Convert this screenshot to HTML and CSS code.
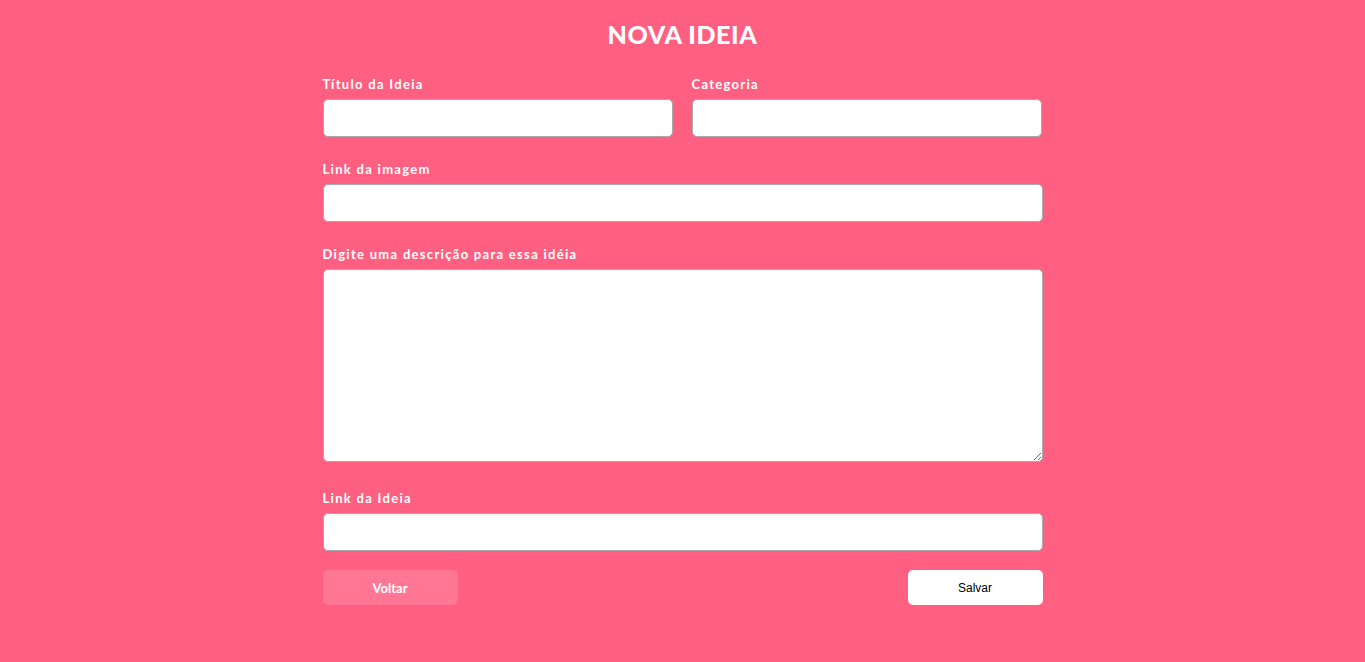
FILE: index.html
```html
<!DOCTYPE html>
<html lang="pt">
<head>
<meta charset="utf-8">
<title>Nova Ideia</title>
<link rel="stylesheet" href="styles.css">
</head>
<body>
<main class="page">
  <h1 class="title">NOVA IDEIA</h1>
  <form class="form">
    <div class="row two">
      <div class="field">
        <label class="label">Título da Ideia</label>
        <input class="input" type="text">
      </div>
      <div class="field">
        <label class="label">Categoria</label>
        <input class="input" type="text">
      </div>
    </div>
    <div class="field">
      <label class="label">Link da imagem</label>
      <input class="input" type="text">
    </div>
    <div class="field">
      <label class="label">Digite uma descrição para essa idéia</label>
      <textarea class="textarea"></textarea>
    </div>
    <div class="field">
      <label class="label">Link da Ideia</label>
      <input class="input" type="text">
    </div>
    <div class="actions">
      <button type="button" class="btn btn-back">Voltar</button>
      <button type="button" class="btn btn-save">Salvar</button>
    </div>
  </form>
</main>
</body>
</html>
```

FILE: styles.css
```css
html, body {
  margin: 0;
  padding: 0;
  background: #ff5f81;
  height: 100%;
}
body {
  font-family: "Lato", "DejaVu Sans", sans-serif;
  color: #fff;
}
.page {
  width: 720px;
  margin: 0 auto;
  padding-top: 19px;
}
.title {
  margin: 0;
  font-size: 25px;
  line-height: 30px;
  font-weight: 900;
  text-align: center;
  letter-spacing: 0.6px;
}
.form {
  margin-top: 27px;
  display: flex;
  flex-direction: column;
  gap: 24px;
}
.row.two {
  display: grid;
  grid-template-columns: 350px 350px;
  column-gap: 19px;
}
.field {
  display: flex;
  flex-direction: column;
}
.label {
  font-size: 13px;
  font-weight: 700;
  line-height: 16px;
  letter-spacing: 1.3px;
  margin-bottom: 7px;
}
.input, .textarea {
  box-sizing: border-box;
  width: 100%;
  border: 1px solid #a9a9a9;
  border-radius: 5px;
  background: #fff;
  margin: 0;
}
.input {
  height: 38px;
}
.textarea {
  height: 193px;
  resize: vertical;
  margin-bottom: 4px;
}
.actions {
  display: flex;
  justify-content: space-between;
  margin-top: -5px;
}
.btn {
  width: 135px;
  height: 35px;
  border: none;
  border-radius: 5px;
  font-size: 12px;
  cursor: pointer;
}
.btn-back {
  background: #ff7794;
  color: #fff;
  font-family: "Lato", sans-serif;
  font-weight: 700;
  font-size: 13px;
}
.btn-save {
  background: #fff;
  color: #000;
  font-family: "Liberation Sans", Arial, sans-serif;
}
```
